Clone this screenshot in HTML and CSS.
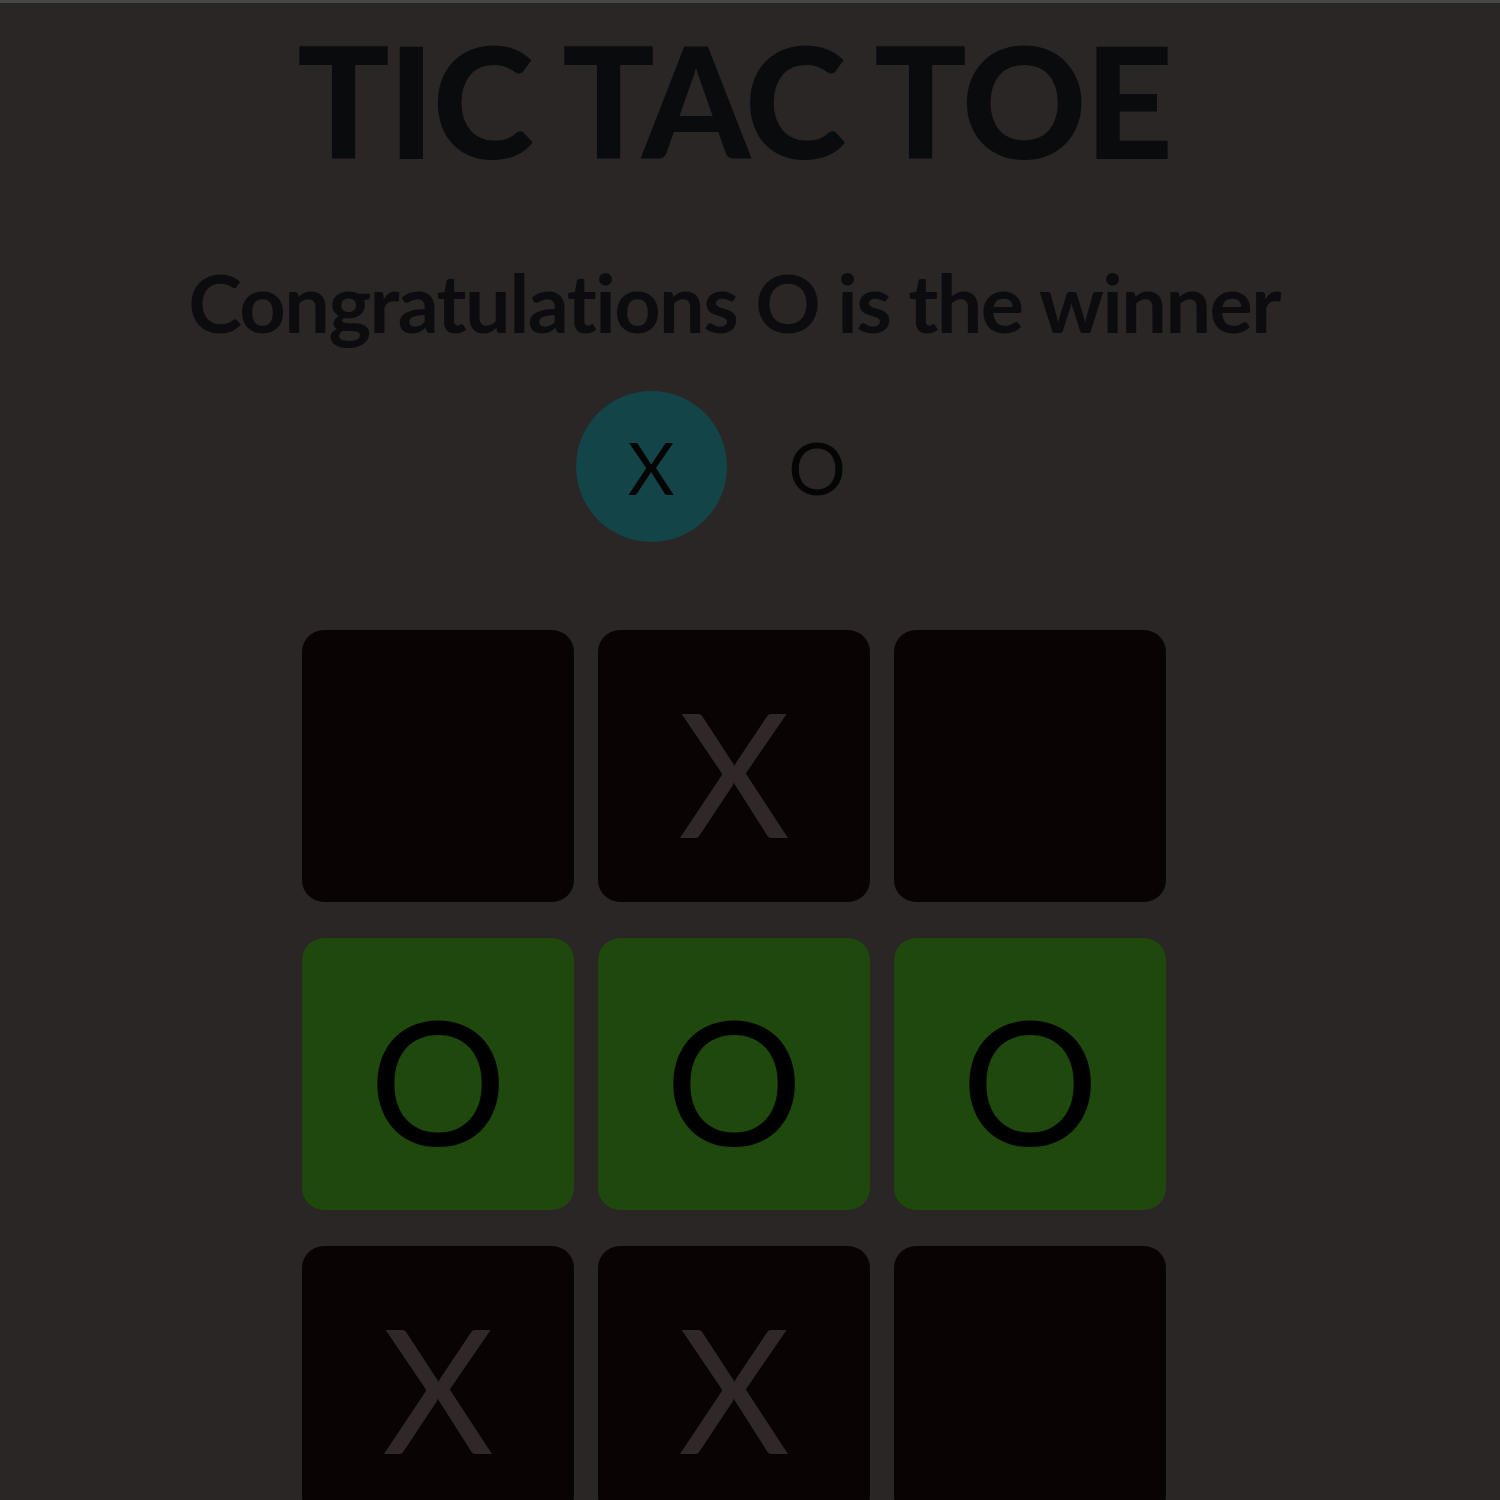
FILE: index.html
```html
<!DOCTYPE html>
<html lang="en">
<head>
<meta charset="utf-8">
<title>Tic Tac Toe</title>
<link rel="stylesheet" href="styles.css">
</head>
<body>
<main class="app">
  <h1 class="title">TIC TAC TOE</h1>
  <p class="status">Congratulations O is the winner</p>
  <div class="turns">
    <div class="turn active">X</div>
    <div class="turn">O</div>
  </div>
  <div class="board">
    <div class="cell"></div>
    <div class="cell x">X</div>
    <div class="cell"></div>
    <div class="cell win">O</div>
    <div class="cell win">O</div>
    <div class="cell win">O</div>
    <div class="cell x">X</div>
    <div class="cell x">X</div>
    <div class="cell"></div>
  </div>
</main>
</body>
</html>
```
FILE: styles.css
```css
html, body {
  margin: 0;
  padding: 0;
}
body {
  background: #2a2626;
  border-top: 3px solid #4a4747;
  font-family: "Lato", "Open Sans", sans-serif;
  font-variant-ligatures: none;
  color: #0a0b0d;
  overflow: hidden;
}
.app {
  display: flex;
  flex-direction: column;
  align-items: center;
  padding-right: 32px;
}
.title {
  margin: 20px 0 0;
  font-size: 154px;
  line-height: 154px;
  font-weight: 900;
  letter-spacing: -2px;
  color: #0a0b0d;
}
.status {
  margin: 84px 0 0;
  font-size: 81px;
  line-height: 81px;
  font-weight: 700;
  letter-spacing: -1.6px;
  color: #0c0c0e;
}
.turns {
  margin-top: 49px;
  display: flex;
  gap: 15px;
}
.turn {
  width: 151px;
  height: 151px;
  border-radius: 50%;
  display: flex;
  align-items: center;
  justify-content: center;
  font-size: 72px;
  font-weight: 400;
  color: #050505;
}
.turn.active {
  background: #134447;
}
.board {
  margin-top: 88px;
  display: grid;
  grid-template-columns: repeat(3, 272px);
  grid-auto-rows: 272px;
  column-gap: 24px;
  row-gap: 36px;
}
.cell {
  background: #0a0303;
  border-radius: 22px;
  display: flex;
  align-items: center;
  justify-content: center;
  padding-top: 10px;
  box-sizing: border-box;
  font-size: 172px;
  font-weight: 400;
  color: #000;
}
.cell.x {
  color: #302828;
}
.cell.win {
  background: #1e480c;
  color: #000;
}
```
